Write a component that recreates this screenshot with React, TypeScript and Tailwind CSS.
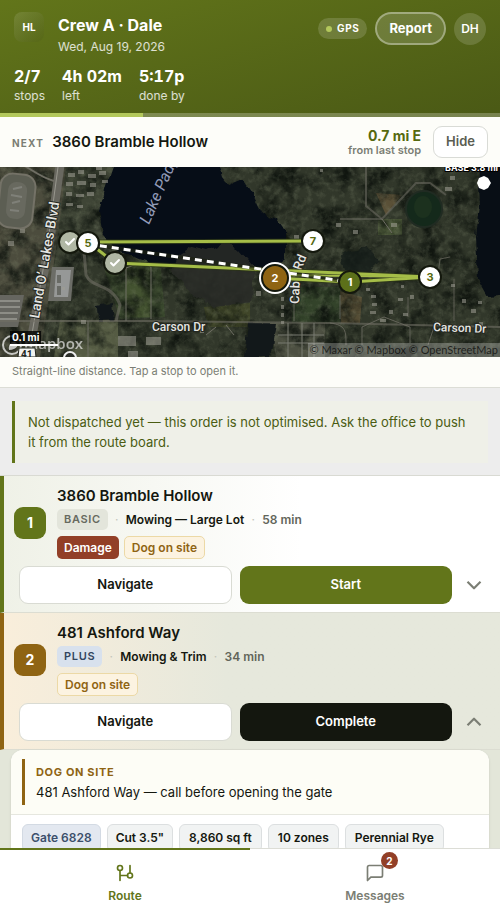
import { useState, type ReactNode } from 'react';
import { Check, ChevronDown, ChevronUp } from 'lucide-react';

type Pin = { id: string; x: number; y: number; kind: 'done' | 'todo' | 'next' | 'active' };

const MAP_W = 500;
const MAP_H = 190;

const pins: Pin[] = [
  { id: '4', x: 70, y: 75, kind: 'done' },
  { id: '6', x: 115, y: 96, kind: 'done' },
  { id: '5', x: 88, y: 76, kind: 'todo' },
  { id: '7', x: 313, y: 74, kind: 'todo' },
  { id: '3', x: 430, y: 110, kind: 'todo' },
  { id: '1', x: 350, y: 115, kind: 'next' },
  { id: '2', x: 275, y: 111, kind: 'active' },
];

const pinStyles = {
  done: 'bg-[#b0b7a4] text-white border-[#14180d]',
  todo: 'bg-white text-[#56690f] border-[#14180d]',
  next: 'bg-[#5c701a] text-white border-[#14180d]',
  active: 'bg-[#8f6413] text-white border-[#14180d] ring-2 ring-white',
};

const stats = [
  { value: '2/7', label: 'stops' },
  { value: '4h 02m', label: 'left' },
  { value: '5:17p', label: 'done by' },
];

// x, y, w, h of roofs along the streets
const roofs = [
  [68, 6, 7, 4], [78, 3, 6, 4], [88, 7, 8, 4], [99, 4, 7, 4], [66, 15, 7, 4], [77, 14, 9, 4], [90, 16, 6, 4],
  [66, 25, 6, 4], [76, 27, 8, 3], [87, 25, 7, 4], [66, 36, 7, 3], [77, 38, 6, 3], [102, 13, 6, 3], [96, 0, 6, 3],
  [8, 74, 6, 5], [20, 62, 5, 4], [118, 169, 18, 10], [146, 170, 15, 8], [128, 184, 10, 6], [81, 153, 5, 4],
  [281, 130, 3, 4], [281, 138, 3, 4], [281, 146, 3, 4], [281, 154, 3, 3], [256, 124, 5, 5], [264, 118, 4, 4],
  [371, 128, 5, 3], [372, 136, 5, 3], [370, 144, 6, 3], [380, 152, 6, 3], [398, 131, 5, 3], [410, 128, 4, 4],
  [389, 143, 4, 4], [403, 146, 5, 3], [445, 20, 7, 4], [450, 9, 5, 4], [336, 56, 5, 4], [353, 63, 5, 4],
  [391, 56, 6, 4], [462, 132, 4, 4], [471, 142, 5, 4], [478, 134, 4, 3], [451, 117, 4, 3], [479, 155, 4, 4],
  [200, 163, 4, 3], [62, 120, 3, 3], [320, 2, 3, 3], [401, 118, 3, 3], [366, 121, 4, 3], [294, 68, 5, 4],
];

function MapTerrain() {
  return (
    <svg viewBox="0 0 500 190" className="absolute inset-0 w-full h-full" aria-hidden="true">
      <defs>
        <filter id="grain" x="0" y="0" width="100%" height="100%" colorInterpolationFilters="sRGB">
          <feTurbulence type="fractalNoise" baseFrequency="0.16" numOctaves="4" seed="8" />
          <feColorMatrix values="0 0 0 0 0.5  0 0 0 0 0.53  0 0 0 0 0.43  2 0 0 0 -0.9" />
        </filter>
        <filter id="shade" x="0" y="0" width="100%" height="100%" colorInterpolationFilters="sRGB">
          <feTurbulence type="fractalNoise" baseFrequency="0.05" numOctaves="5" seed="21" />
          <feColorMatrix values="0 0 0 0 0.05  0 0 0 0 0.07  0 0 0 0 0.05  0 2.6 0 0 -1.05" />
        </filter>
        <filter id="shore" x="-5%" y="-5%" width="110%" height="110%" colorInterpolationFilters="sRGB">
          <feTurbulence type="fractalNoise" baseFrequency="0.09" numOctaves="3" seed="3" />
          <feDisplacementMap in="SourceGraphic" scale="7" xChannelSelector="R" yChannelSelector="G" />
        </filter>
      </defs>

      <rect width="500" height="190" fill="#31372a" />
      <path d="M0 0H68L40 190H0Z" fill="#4c4c3d" />
      <path d="M66 0H116L98 50L104 76L82 92L62 120L50 190H44Z" fill="#3f4536" />
      <path d="M104 100L160 90L165 150L120 152Z" fill="#39472d" />
      <path d="M126 102L140 96L151 100V150H125Z" fill="#435230" />
      <path d="M292 120H340V156H292Z" fill="#33432a" />
      <path d="M340 124L362 130L360 156H341Z" fill="#544c34" />
      <path d="M376 26L402 28L386 48Z" fill="#5a5037" />
      <path d="M378 52H402V68H378Z" fill="#455134" />
      <path d="M204 140L250 136V160H208Z" fill="#3f4528" />
      <path d="M60 153H118V190H54Z" fill="#555b43" />
      <path d="M270 156H325V190H276Z" fill="#4d5042" />
      <rect width="500" height="190" filter="url(#shade)" opacity="0.9" />
      <rect width="500" height="190" filter="url(#grain)" opacity="0.35" />

      {/* water */}
      <g filter="url(#shore)">
        <path d="M115 -6H217L222 10L228 18L242 12L254 30L262 46L276 52L286 66L286 92L270 104L250 98L210 98L158 98L118 84L103 68L99 44L106 20Z" fill="#060d17" />
        <path d="M478 -6H508V128L488 130L478 112L476 70L480 40Z" fill="#080e15" />
        <path d="M97 139L112 136L114 154L98 155Z" fill="#11171a" />
        <path d="M248 156H276L270 190H244Z" fill="#12181a" />
        <path d="M340 88L366 80L380 94L368 106L344 104Z" fill="#131b18" opacity="0.75" />
      </g>
      <path
        d="M180 88L192 80L206 84L226 74L240 84L254 100L252 136L214 140L188 124L172 104Z"
        fill="#292b27"
        opacity="0.85"
        filter="url(#shore)"
      />
      <ellipse cx="424" cy="42" rx="18" ry="18" fill="#14291b" stroke="#202b22" strokeWidth="2" />
      <ellipse cx="423" cy="40" rx="9" ry="11" fill="#20341f" opacity="0.7" />

      {/* race track */}
      <rect x="-1" y="7" width="35" height="54" rx="12" fill="#5c5e53" stroke="#747267" strokeWidth="2" transform="rotate(6 16 34)" />
      <rect x="7" y="15" width="19" height="37" rx="8" fill="#68695f" transform="rotate(6 16 34)" />
      <path d="M13 22L22 20M11 28L22 30M12 36L20 34M10 43L19 44" stroke="#8a8b84" strokeWidth="2" opacity="0.7" />

      {/* warehouses */}
      <path d="M52 100H74L71 134H48Z" fill="#6c6d67" />
      <path d="M56 103H71L68 130H54Z" fill="#969897" />
      <path d="M57 108H61V116H57ZM57 119H61V128H57Z" fill="#696b66" />
      <path d="M0 128H24L18 160H0Z" fill="#666660" />
      <path d="M0 134H20M0 140H20M0 146H18M0 152H17" stroke="#8d8d86" strokeWidth="2" />

      {/* roads */}
      <g fill="none" stroke="#6f6e64">
        <path d="M60 -2L50 72L28 190" strokeWidth="9" stroke="#696860" />
        <path d="M58 0L48 74L28 190" strokeWidth="1" stroke="#98978e" />
        <path d="M0 154H150L330 156L500 160" strokeWidth="2" opacity="0.6" />
        <path d="M88 154V190M126 100V154M151 100V152M126 101L140 96L151 100" strokeWidth="1" />
        <path d="M54 14C40 10 34 4 20 -4" strokeWidth="2" />
        <path d="M84 84L86 108C92 122 112 116 120 138L116 154" strokeWidth="3" opacity="0.6" />
        <path d="M366 0V39L382 52L416 16H430L446 28" strokeWidth="2" opacity="0.55" />
        <path d="M340 52H382L392 66" strokeWidth="1" />
        <path d="M294 100V154M340 128V152M330 156C346 158 346 164 346 178M362 178V160L384 150L410 160V176" strokeWidth="1" opacity="0.8" />
        <path d="M408 130V150M454 112V154M428 178L436 154M438 108L440 92L450 90" strokeWidth="1" opacity="0.7" />
        <path d="M278 168H324M278 176H324M288 156V190M302 156V190M314 156V190" strokeWidth="1" stroke="#7b7c72" />
        <path d="M206 168L216 160M226 158L234 168" strokeWidth="1" />
      </g>
      <g fill="#a09f95" opacity="0.55">
        {roofs.map(([x, y, w, h]) => (
          <rect key={`${x}-${y}`} x={x} y={y} width={w} height={h} />
        ))}
      </g>

      {/* place names */}
      <text transform="translate(149 58) rotate(-66)" className="font-[Roboto,sans-serif] italic text-[16px]" fill="#929bb8">
        Lake Padgett
      </text>
      <g
        className="font-[Roboto,sans-serif] text-[13px] font-medium"
        fill="#e4e4e1"
        stroke="#23261f"
        strokeWidth="2"
        paintOrder="stroke"
        strokeLinejoin="round"
      >
        <text transform="translate(39 152) rotate(-80)" className="text-[14px]">
          Land O’ Lakes Blvd
        </text>
        <text x="152" y="164" className="text-[12px]">Carson Dr</text>
        <text transform="translate(433 164) rotate(2)" className="text-[12px]">Carson Dr</text>
        <text transform="translate(299 137) rotate(-88)">Cab</text>
        <text transform="translate(301 104) rotate(-68)">Rd</text>
      </g>

      {/* route legs */}
      <g fill="none" strokeLinecap="round">
        <path d="M313 74L88 75L115 96L430 110L350 115L275 111" stroke="#2c3615" strokeWidth="5" opacity="0.7" />
        <path d="M313 74L88 75L115 96L430 110L350 115L275 111" stroke="#a5bd48" strokeWidth="3" />
        <path d="M275 108L430 110" stroke="#a5bd48" strokeWidth="2" />
        <path d="M88 77L350 115" stroke="#1c2210" strokeWidth="4" opacity="0.6" />
        <path d="M88 77L350 115" stroke="#fff" strokeWidth="3" strokeDasharray="7 5" strokeLinecap="butt" />
      </g>

      {/* base */}
      <path d="M484 9L488 11L491 16L488 21L484 23L479 21L477 16L479 11Z" fill="#fff" />
      <text x="445" y="4" className="font-[Inter,sans-serif] text-[9px] font-bold" fill="#fff" stroke="#000" strokeWidth="2" paintOrder="stroke">
        BASE 3.8 mi
      </text>

      {/* provider mark */}
      <g opacity="0.7">
        <circle cx="12" cy="178" r="9" fill="none" stroke="#fff" strokeWidth="2" />
        <path d="M9 183C8 177 12 174 15 175C20 177 17 183 9 183Z" fill="#fff" />
        <text x="24" y="182" className="font-['Open_Sans',sans-serif] text-[15px] font-semibold" fill="#e8e8e6">
          mapbox
        </text>
      </g>
      <path d="M19 181H35L36 190H18Z" fill="#f2f2ef" stroke="#23261f" />
      <text x="21" y="191" className="font-[Roboto,sans-serif] text-[10px] font-bold" fill="#23261f">
        41
      </text>
      <circle cx="70" cy="191" r="6" fill="#2c2f29" stroke="#eee" strokeWidth="2" />
    </svg>
  );
}

function RouteMap() {
  return (
    <div className="relative w-full aspect-[500/190] overflow-hidden bg-[#2d3327]">
      <MapTerrain />
      {pins.map((pin) => (
        <button
          key={pin.id}
          type="button"
          aria-label={`Stop ${pin.id}`}
          className={`absolute -translate-x-1/2 -translate-y-1/2 flex items-center justify-center rounded-full border-2 text-[11px] font-bold ${
            pin.kind === 'active' ? 'size-7' : 'size-6'
          } ${pinStyles[pin.kind]}`}
          style={{ left: `${(pin.x / MAP_W) * 100}%`, top: `${(pin.y / MAP_H) * 100}%` }}
        >
          {pin.kind === 'done' ? <Check size={12} strokeWidth={4} /> : pin.id}
        </button>
      ))}
      <div className="absolute left-[10px] bottom-[11px] flex flex-col items-start">
        <span className="bg-black/80 px-[2px] text-[10px] leading-[13px] font-bold text-white">0.1 mi</span>
        <span className="w-12 h-[2px] bg-white" />
      </div>
      <div className="absolute right-0 bottom-0 bg-white/25 px-[2px] font-[Lato,sans-serif] text-[11px] leading-[14px] text-black/70">
        © Maxar © Mapbox © OpenStreetMap
      </div>
    </div>
  );
}

type StopProps = {
  number: number;
  title: string;
  plan: ReactNode;
  service: string;
  duration: string;
  tags: ReactNode;
  action: string;
  active?: boolean;
  open: boolean;
  onToggle: () => void;
};

function StopCard({ number, title, plan, service, duration, tags, action, active, open, onToggle }: StopProps) {
  const Chevron = open ? ChevronUp : ChevronDown;

  return (
    <article
      className={`border-l-4 border-b border-b-[#dcddd2] pt-[10px] pb-2 ${
        active
          ? 'border-l-[#8f6413] bg-linear-to-r from-[#f9eedb] to-[#e6e8dc] to-45%'
          : 'border-l-[#62751a] bg-linear-to-r from-[#eff1e7] to-white to-60%'
      }`}
    >
      <div className="flex items-center gap-[11px] pl-[10px] pr-3">
        <div
          className={`size-8 shrink-0 rounded-[9px] flex items-center justify-center text-[14px] font-bold text-white ${
            active ? 'bg-[#8f6413]' : 'bg-[#62751a]'
          }`}
        >
          {number}
        </div>
        <div className="min-w-0">
          <h2 className="text-[15px] leading-5 font-semibold">{title}</h2>
          <div className="mt-[3px] flex items-center text-[12px] leading-[21px] font-semibold">
            {plan}
            <span className="w-[18px] text-center font-normal text-[#c3c5ba]">·</span>
            <span>{service}</span>
            <span className="w-[18px] text-center font-normal text-[#c3c5ba]">·</span>
            <span className="text-[#62655a]">{duration}</span>
          </div>
          <div className="mt-[6px] flex gap-[5px]">{tags}</div>
        </div>
      </div>
      <div className="mt-[7px] pl-[15px] flex items-center">
        <div className="flex-1 grid grid-cols-2 gap-2">
          <button type="button" className="h-[38px] rounded-[9px] border border-[#d9dbd3] bg-white text-[13px] font-semibold">
            Navigate
          </button>
          <button
            type="button"
            className={`h-[38px] rounded-[9px] text-[13px] font-semibold text-white ${active ? 'bg-[#14170f]' : 'bg-[#62751a]'}`}
          >
            {action}
          </button>
        </div>
        <button
          type="button"
          aria-label={open ? 'Collapse stop' : 'Expand stop'}
          onClick={onToggle}
          className="w-12 h-[38px] pr-1 flex items-center justify-center text-[#7b7e74]"
        >
          <Chevron size={26} strokeWidth={2} strokeLinecap="butt" />
        </button>
      </div>
    </article>
  );
}

function PlanBadge({ className, children }: { className: string; children: ReactNode }) {
  return (
    <span className={`rounded-[5px] px-[7px] text-[11px] leading-[21px] font-semibold tracking-[0.06em] ${className}`}>{children}</span>
  );
}

function DogTag() {
  return (
    <span className="rounded-[5px] border border-[#ecd9a6] bg-[#fcf3e1] px-[7px] text-[12px] leading-[21px] font-semibold text-[#8f6413]">
      Dog on site
    </span>
  );
}

export default function App() {
  const [openStop, setOpenStop] = useState(2);
  const toggle = (stop: number) => setOpenStop(openStop === stop ? 0 : stop);

  return (
    <div className="h-screen flex flex-col bg-[#ededed] font-[Inter,sans-serif] text-[#14170f]">
      <header className="shrink-0 bg-linear-165 from-[#62751a] to-[#4a5915] text-white">
        <div className="px-[14px] pt-3 flex items-start">
          <div className="size-[30px] rounded-lg bg-linear-135 from-white/12 to-black/5 flex items-center justify-center text-[10px] font-bold">
            HL
          </div>
          <div className="ml-[14px] flex-1">
            <h1 className="text-[16px] leading-[26px] font-bold">Crew A · Dale</h1>
            <p className="text-[12px] leading-[18px] text-white/80">Wed, Aug 19, 2026</p>
          </div>
          <div className="flex items-center gap-2">
            <span className="h-[21px] rounded-full bg-white/15 px-2 flex items-center gap-[5px] text-[10px] font-bold tracking-[0.06em]">
              <span className="size-[6px] rounded-full bg-[#b3c85c]" />
              GPS
            </span>
            <button type="button" className="h-[33px] rounded-full border-2 border-white/35 bg-white/15 px-3 text-[13px] font-bold">
              Report
            </button>
            <button type="button" aria-label="Account" className="size-8 rounded-full bg-white/15 text-[12px] font-semibold">
              DH
            </button>
          </div>
        </div>
        <dl className="px-[14px] pt-[10px] pb-2 flex gap-[17px]">
          {stats.map((stat) => (
            <div key={stat.label} className="flex flex-col-reverse">
              <dt className="text-[12px] leading-[18px] text-white/80">{stat.label}</dt>
              <dd className="text-[16px] leading-[21px] font-bold tabular-nums">{stat.value}</dd>
            </div>
          ))}
        </dl>
        <div className="h-1 bg-white/25">
          <div className="h-full bg-[#b3c85c]" style={{ width: `${(2 / 7) * 100}%` }} />
        </div>
      </header>

      <main className="flex-1 min-h-0 overflow-y-auto [scrollbar-width:none]">
        <section className="bg-[#fdfdf9] border-b border-[#dcddd6]">
          <div className="h-[50px] px-3 flex items-center">
            <div className="flex-1 flex items-baseline gap-2">
              <span className="text-[10px] font-bold tracking-[0.12em] text-[#7b7e74]">NEXT</span>
              <h2 className="text-[15px] font-semibold">3860 Bramble Hollow</h2>
            </div>
            <div className="mr-3 text-right">
              <p className="text-[14px] leading-4 font-bold text-[#56690f]">0.7 mi E</p>
              <p className="text-[11px] leading-[13px] font-semibold text-[#7b7e74]">from last stop</p>
            </div>
            <button type="button" className="h-8 rounded-[9px] border border-[#d9dbd6] bg-white px-3 text-[13px] font-semibold text-[#5a5d52]">
              Hide
            </button>
          </div>
          <RouteMap />
          <p className="px-3 pt-[5px] pb-[7px] text-[11px] leading-[18px] text-[#7b7e74]">
            Straight-line distance. Tap a stop to open it.
          </p>
        </section>

        <div className="px-3 pt-[13px] pb-3 border-b border-[#d9dad3]">
          <p
            role="status"
            className="border-l-[3px] border-[#62751a] bg-[#eff0e8] py-[11px] pl-[13px] pr-3 text-[13px] leading-5 text-[#4a5c12]"
          >
            Not dispatched yet — this order is not optimised. Ask the office to push it from the route board.
          </p>
        </div>

        <StopCard
          number={1}
          title="3860 Bramble Hollow"
          plan={<PlanBadge className="bg-[#e3e5db] text-[#676a5f]">BASIC</PlanBadge>}
          service="Mowing — Large Lot"
          duration="58 min"
          tags={
            <>
              <span className="rounded-[5px] bg-[#923f27] px-[7px] text-[12px] leading-[23px] font-semibold text-white">Damage</span>
              <DogTag />
            </>
          }
          action="Start"
          open={openStop === 1}
          onToggle={() => toggle(1)}
        />
        <StopCard
          number={2}
          title="481 Ashford Way"
          plan={<PlanBadge className="bg-[#d8e1ed] text-[#33465f]">PLUS</PlanBadge>}
          service="Mowing & Trim"
          duration="34 min"
          tags={<DogTag />}
          action="Complete"
          active
          open={openStop === 2}
          onToggle={() => toggle(2)}
        />

        {openStop === 2 && (
          <div className="bg-[#e3e6d9] px-[11px] pb-3">
            <div className="rounded-xl bg-white overflow-hidden shadow-sm">
              <div className="bg-[#fdfdf6] border-b border-[#e6e7df] px-[11px] py-[9px]">
                <div className="border-l-[3px] border-[#8f6413] pl-[11px] py-[3px]">
                  <h3 className="text-[11px] leading-5 font-bold tracking-[0.06em] text-[#8f6413]">DOG ON SITE</h3>
                  <p className="text-[13px] leading-5">481 Ashford Way — call before opening the gate</p>
                </div>
              </div>
              <ul className="px-[11px] py-[9px] flex flex-wrap gap-[6px] text-[12px] leading-[26px] font-semibold">
                <li className="rounded-md border border-[#d3dae3] bg-[#e3e8f0] px-2 text-[#3c4f6b]">Gate 6828</li>
                <li className="rounded-md border border-[#dcdfe0] bg-[#f1f3f3] px-2">Cut 3.5"</li>
                <li className="rounded-md border border-[#dcdfe0] bg-[#f1f3f3] px-[9px]">8,860 sq ft</li>
                <li className="rounded-md border border-[#dcdfe0] bg-[#f1f3f3] px-[9px]">10 zones</li>
                <li className="rounded-md border border-[#dcdfe0] bg-[#f1f3f3] px-[9px]">Perennial Rye</li>
              </ul>
            </div>
          </div>
        )}
      </main>

      <nav className="shrink-0 h-[72px] bg-white grid grid-cols-2 text-[12px] leading-[18px] font-semibold">
        <a href="#route" aria-current="page" className="border-t-2 border-[#62751a] pt-[13px] flex flex-col items-center gap-1 text-[#62751a]">
          <svg width="20" height="20" viewBox="0 0 24 24" fill="none" stroke="currentColor" strokeWidth="2" aria-hidden="true">
            <circle cx="6" cy="6" r="3" />
            <circle cx="18" cy="15" r="3" />
            <path d="M6 9v12M18 3v9M6 15h9" strokeLinecap="round" />
          </svg>
          Route
        </a>
        <a href="#messages" className="border-t border-[#dcddd6] pt-[14px] flex flex-col items-center gap-1 text-[#7b7e74]">
          <span className="relative">
            <svg width="20" height="20" viewBox="0 0 24 24" fill="none" stroke="currentColor" strokeWidth="2" strokeLinejoin="round" aria-hidden="true">
              <path d="M21 15a2 2 0 0 1-2 2H7l-4 4V5a2 2 0 0 1 2-2h14a2 2 0 0 1 2 2z" />
            </svg>
            <span className="absolute -top-[11px] -right-[13px] size-[17px] rounded-full bg-[#923f27] flex items-center justify-center text-[10px] leading-none font-bold text-white">
              2
            </span>
          </span>
          Messages
        </a>
      </nav>
    </div>
  );
}
